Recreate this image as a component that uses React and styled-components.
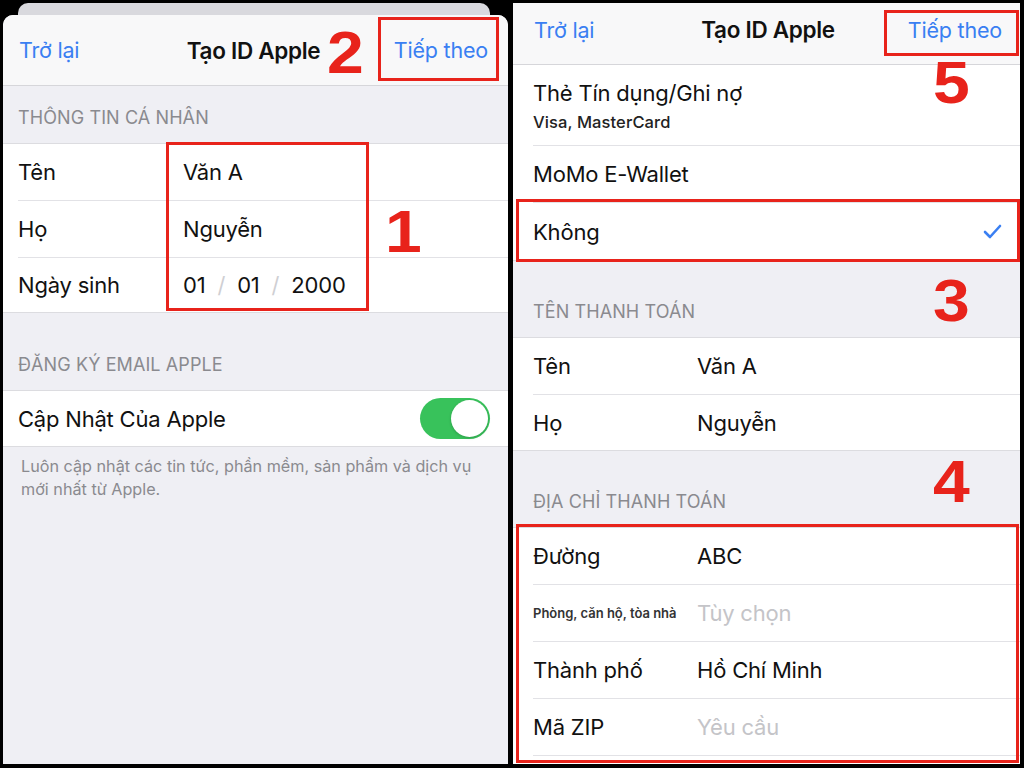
import React from 'react';
import styled, { createGlobalStyle } from 'styled-components';

const GlobalStyle = createGlobalStyle`
  html, body {
    margin: 0;
    padding: 0;
    background: #000;
  }
  * { box-sizing: border-box; }
`;

const Page = styled.div`
  width: 1024px;
  height: 768px;
  background: #000;
  display: flex;
  padding: 3px 4px 4px 3px;
  gap: 5px;
  font-family: Inter, "Noto Sans", sans-serif;
  color: #111;
  overflow: hidden;
`;

const LeftColumn = styled.div`
  width: 505px;
  display: flex;
  flex-direction: column;
`;

const BackCard = styled.div`
  height: 12px;
  margin: 0 18px 0 15px;
  background: #d9d9de;
  border-radius: 10px 10px 0 0;
`;

const Screen = styled.div`
  position: relative;
  flex: 1;
  width: ${p => p.$w || 'auto'};
  background: #efeff4;
  border-radius: ${p => (p.$sheet ? '10px 10px 0 0' : '0')};
  overflow: hidden;
  display: flex;
  flex-direction: column;
`;

const NavBar = styled.div`
  height: ${p => p.$h}px;
  flex-shrink: 0;
  background: #f8f8f9;
  border-bottom: 1px solid #d6d6da;
  display: grid;
  grid-template-columns: 1fr auto 1fr;
  align-items: center;
  padding: 0 ${p => p.$pr}px ${p => p.$pb}px ${p => p.$pl}px;
  font-size: 21.5px;
`;

const NavLink = styled.span`
  color: #3a7ff2;
  justify-self: ${p => (p.$right ? 'end' : 'start')};
  letter-spacing: -0.2px;
`;

const NavTitle = styled.span`
  font-size: 22.5px;
  font-weight: 600;
  color: #111;
  letter-spacing: -0.3px;
`;

const SectionHeader = styled.div`
  height: ${p => p.$h}px;
  flex-shrink: 0;
  display: flex;
  align-items: flex-end;
  padding: 0 16px ${p => p.$pb}px ${p => p.$pl}px;
  font-size: 18px;
  color: #8a8a8f;
  letter-spacing: 0.1px;
`;

const Group = styled.div`
  background: #fff;
  border-top: ${p => (p.$flush ? 'none' : '1px solid #dcdce0')};
  border-bottom: ${p => (p.$open ? 'none' : '1px solid #dcdce0')};
  padding-left: ${p => p.$pl}px;
  flex-shrink: 0;
`;

const Row = styled.div`
  height: ${p => p.$h || 56}px;
  display: flex;
  align-items: center;
  padding-right: 18px;
  font-size: 22px;
  letter-spacing: -0.2px;
  & + & {
    border-top: 1px solid #e2e2e6;
  }
`;

const Label = styled.span`
  width: ${p => p.$w}px;
  flex-shrink: 0;
  font-size: ${p => (p.$small ? '13px' : '22px')};
  font-weight: ${p => (p.$small ? 600 : 400)};
  color: ${p => (p.$small ? '#333' : '#111')};
  letter-spacing: ${p => (p.$small ? '0' : '-0.2px')};
`;

const Value = styled.span`
  color: ${p => (p.$placeholder ? '#c4c4c8' : '#111')};
  flex: 1;
`;

const Slash = styled.span`
  color: #cfcfd3;
  margin: 0 12px;
`;

const Stack = styled.div`
  display: flex;
  flex-direction: column;
  gap: 6px;
  flex: 1;
  padding-top: 2px;
`;

const SubText = styled.span`
  font-size: 16.5px;
  font-weight: 500;
  color: #222;
  letter-spacing: 0.1px;
`;

const Footer = styled.div`
  padding: 8px 30px 0 18px;
  font-size: 16.2px;
  line-height: 23px;
  color: #8a8a8f;
`;

const Switch = styled.div`
  margin-left: auto;
  width: 70px;
  height: 41px;
  border-radius: 21px;
  background: #38c25b;
  padding: 2px;
  display: flex;
  justify-content: flex-end;
`;

const Knob = styled.div`
  width: 37px;
  height: 37px;
  border-radius: 50%;
  background: #fff;
  box-shadow: 0 1px 3px rgba(0, 0, 0, 0.2);
`;

const Mark = styled.div`
  position: absolute;
  left: ${p => p.$x}px;
  top: ${p => p.$y}px;
  width: ${p => p.$w}px;
  height: ${p => p.$h}px;
  border: 3px solid #e8231b;
  pointer-events: none;
`;

const Digit = styled.div`
  position: absolute;
  left: ${p => p.$x}px;
  top: ${p => p.$y}px;
  font-family: "Liberation Sans", Arial, sans-serif;
  font-weight: 700;
  font-size: 59px;
  line-height: 1;
  color: #e8231b;
  transform: scaleX(1.12);
  transform-origin: left top;
`;

function Check() {
  return (
    <svg width="19" height="15" viewBox="0 0 19 15" style={{ marginLeft: 'auto' }}>
      <path d="M2 8 L7 13 L17 2" fill="none" stroke="#3a7ff2" strokeWidth="2.6" strokeLinecap="round" strokeLinejoin="round" />
    </svg>
  );
}

function LeftScreen() {
  return (
    <LeftColumn>
      <BackCard />
      <Screen $sheet>
        <NavBar $h={71} $pr={20} $pb={0} $pl={16}>
          <NavLink>Trở lại</NavLink>
          <NavTitle>Tạo ID Apple</NavTitle>
          <NavLink $right>Tiếp theo</NavLink>
        </NavBar>
        <SectionHeader $h={57} $pb={15} $pl={15}>THÔNG TIN CÁ NHÂN</SectionHeader>
        <Group $pl={15}>
          <Row $h={56}>
            <Label $w={165}>Tên</Label>
            <Value>Văn A</Value>
          </Row>
          <Row $h={57}>
            <Label $w={165}>Họ</Label>
            <Value>Nguyễn</Value>
          </Row>
          <Row $h={55}>
            <Label $w={165}>Ngày sinh</Label>
            <Value>
              01<Slash>/</Slash>01<Slash>/</Slash>2000
            </Value>
          </Row>
        </Group>
        <SectionHeader $h={77} $pb={15} $pl={15}>ĐĂNG KÝ EMAIL APPLE</SectionHeader>
        <Group $pl={15}>
          <Row $h={55}>
            <Label $w={300}>Cập Nhật Của Apple</Label>
            <Switch>
              <Knob />
            </Switch>
          </Row>
        </Group>
        <Footer>
          Luôn cập nhật các tin tức, phần mềm, sản phẩm và dịch vụ mới nhất từ Apple.
        </Footer>

        <Mark $x={163} $y={127} $w={203} $h={169} />
        <Mark $x={375} $y={2} $w={121} $h={64} />
        <Digit $x={324} $y={9}>2</Digit>
        <Digit $x={382} $y={188}>1</Digit>
      </Screen>
    </LeftColumn>
  );
}

function RightScreen() {
  return (
    <Screen $w="507px">
      <NavBar $h={62} $pr={18} $pb={8} $pl={21}>
        <NavLink>Trở lại</NavLink>
        <NavTitle>Tạo ID Apple</NavTitle>
        <NavLink $right>Tiếp theo</NavLink>
      </NavBar>
      <Group $flush $pl={20}>
        <Row $h={80}>
          <Stack>
            <span>Thẻ Tín dụng/Ghi nợ</span>
            <SubText>Visa, MasterCard</SubText>
          </Stack>
        </Row>
        <Row $h={57}>
          <span>MoMo E-Wallet</span>
        </Row>
        <Row $h={58}>
          <span>Không</span>
          <Check />
        </Row>
      </Group>
      <SectionHeader $h={76} $pb={15} $pl={20}>TÊN THANH TOÁN</SectionHeader>
      <Group $pl={20}>
        <Row $h={56}>
          <Label $w={164}>Tên</Label>
          <Value>Văn A</Value>
        </Row>
        <Row $h={56}>
          <Label $w={164}>Họ</Label>
          <Value>Nguyễn</Value>
        </Row>
      </Group>
      <SectionHeader $h={76} $pb={15} $pl={20}>ĐỊA CHỈ THANH TOÁN</SectionHeader>
      <Group $open $pl={20}>
        <Row $h={56}>
          <Label $w={164}>Đường</Label>
          <Value>ABC</Value>
        </Row>
        <Row $h={57}>
          <Label $w={164} $small>Phòng, căn hộ, tòa nhà</Label>
          <Value $placeholder>Tùy chọn</Value>
        </Row>
        <Row $h={57}>
          <Label $w={164}>Thành phố</Label>
          <Value>Hồ Chí Minh</Value>
        </Row>
        <Row $h={57}>
          <Label $w={164}>Mã ZIP</Label>
          <Value $placeholder>Yêu cầu</Value>
        </Row>
        <Row $h={40} />
      </Group>

      <Mark $x={371} $y={7} $w={135} $h={46} />
      <Mark $x={3} $y={196} $w={504} $h={63} />
      <Mark $x={3} $y={521} $w={503} $h={239} />
      <Digit $x={420} $y={51}>5</Digit>
      <Digit $x={420} $y={269}>3</Digit>
      <Digit $x={420} $y={450}>4</Digit>
    </Screen>
  );
}

export default function App() {
  return (
    <>
      <GlobalStyle />
      <Page>
        <LeftScreen />
        <RightScreen />
      </Page>
    </>
  );
}
